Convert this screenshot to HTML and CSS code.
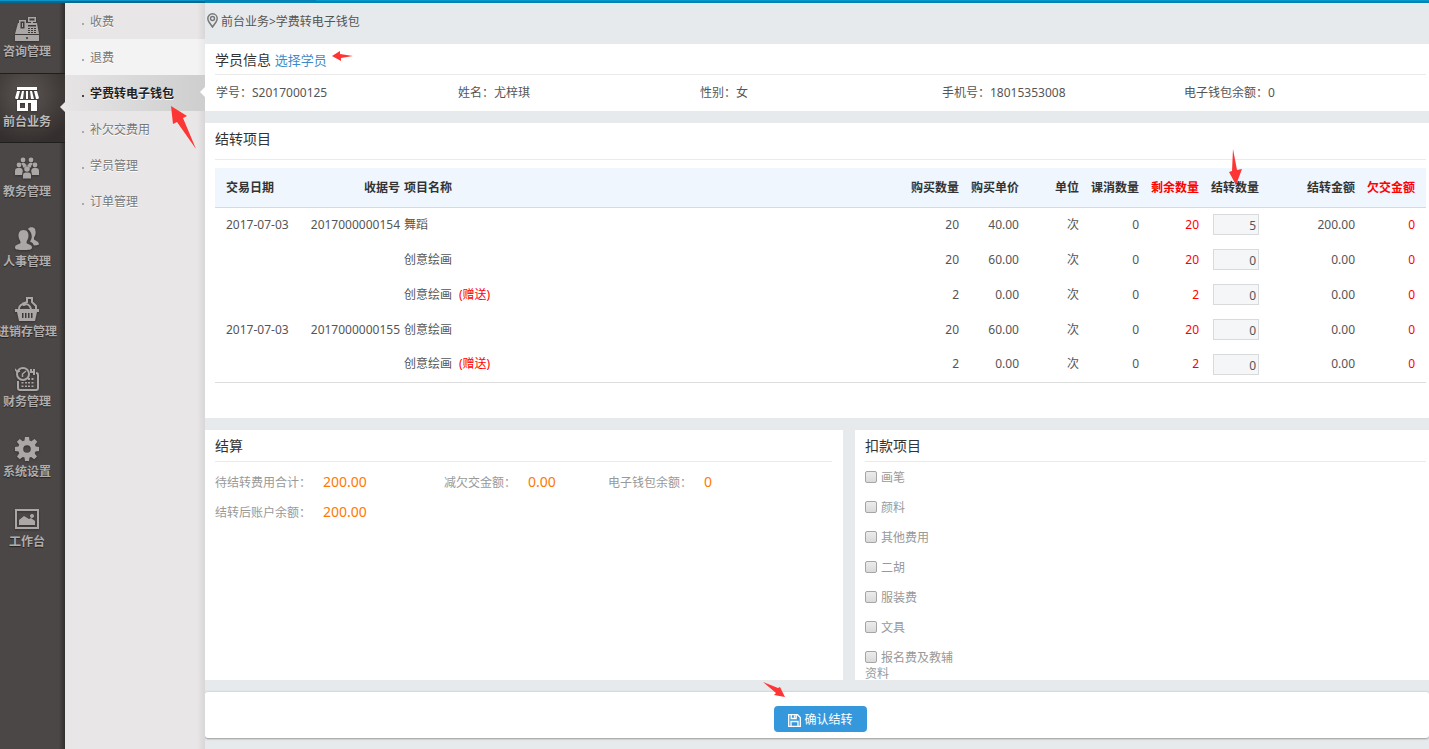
FILE: index.html
```html
<!DOCTYPE html>
<html lang="zh-CN">
<head>
<meta charset="utf-8">
<title>学费转电子钱包</title>
<link rel="stylesheet" href="styles.css">
</head>
<body>
<div class="topbar"></div>
<div class="app">
  <nav class="nav">
    <a class="nav-item" href="#"><svg class="nav-icon" viewBox="0 0 24 24"><path fill-rule="evenodd" d="M13 0h8v5h-3v1h4l2 11H0L3 6h1V3h7v3h5V5h-3zM14.500 1.500v2h5v-2zM5.500 4.500v7h4v-7zM7 6h1v4H7zM13 8v1.500h8V8zM13 11v1h2v-1zM16 11v1h2v-1zM19 11v1h2v-1zM13 13v1h2v-1zM16 13v1h2v-1zM19 13v1h2v-1zM13 15v1h2v-1zM16 15v1h2v-1zM19 15v1h2v-1zM0 18h24v6H0zM12 20a1 1 0 1 0 .01 0z"/></svg><span>咨询管理</span></a>
    <a class="nav-item active" href="#"><svg class="nav-icon" viewBox="0 0 24 24"><path fill-rule="evenodd" d="M2 0h20v3H2zM2 4h3L3 12H1l-1-1zM7 4h2L8 12H5zM11 4h2v8h-2zM15 4h2l2 8h-3zM19 4h3l2 7-1 1h-2zM2 13h20v11h-6v-8h-3v8H2zM5 16v5h5v-5z"/></svg><span>前台业务</span></a>
    <a class="nav-item" href="#"><svg class="nav-icon" viewBox="0 0 24 24"><circle cx="8" cy="3" r="2.400"/><circle cx="16" cy="3" r="2.400"/><circle cx="4" cy="8" r="2.400"/><circle cx="20" cy="8" r="2.400"/><circle cx="12" cy="12" r="2.800"/><path d="M6.500 6h3l2 2v1l-2 1.500H8Q8 8 6.500 7zM17.500 6h-3l-2 2v1l2 1.500H16Q16 8 17.500 7zM0 18v-4q0-3 3-3h2q2.500 0 2.800 3L7 18zM24 18v-4q0-3-3-3h-2q-2.500 0-2.800 3l.8 4zM8 21.500V18q0-2.500 3-2.500h2q3 0 3 2.500v3.500z"/></svg><span>教务管理</span></a>
    <a class="nav-item" href="#"><svg class="nav-icon" viewBox="0 0 24 24"><path d="M13 2c1-2.500 6-2.500 7 0s1 6-1 8.500v2c2 1.500 5 2 5 5q-2 1-5 1-1-3-4-4c3-4 2-9-2-12.500zM8.500 3c4 0 5 3 5 6s-2 4.500-2 6.500c0 2 5.500 1.500 5.500 5 0 2.500-4 2.500-8.500 2.500S0 23 0 20.500c0-3.500 5.500-3 5.500-5S3.500 12 3.500 9s1-6 5-6z"/></svg><span>人事管理</span></a>
    <a class="nav-item" href="#"><svg class="nav-icon" viewBox="0 0 24 24"><path fill-rule="evenodd" d="M0 12h24v3h-2l-2 9H4L2 15H0zM7 16v5h1.500v-5zM10 16v5h1.500v-5zM13 16v5h1.500v-5zM16 16v5h1.500v-5z"/><path class="line" d="M4 12c0-4 3-5 5-4 3-2 6 0 7 4M7 7l5-2V1h5v4l4 4v3"/></svg><span>进销存管理</span></a>
    <a class="nav-item" href="#"><svg class="nav-icon" viewBox="0 0 24 24"><path class="line" d="M3 14v7q0 2 2 2h16q2 0 2-2V8q0-2-2-2M15 5h4M16 2v3M19 2v6"/><circle class="line" cx="8" cy="7" r="6"/><path class="line thin" d="M11 4L7.500 7v3M0 2l2 3 3-1"/><path d="M13 11h2v2h-2zM16.500 11h2v2h-2zM6.500 15h2v1.500h-2zM10 15h2v1.500h-2zM13 15h2v1.500h-2zM16.500 15h2v1.500h-2zM6.500 18.500h2V20h-2zM10 18.500h2V20h-2zM13 18.500h2V20h-2zM16.500 18.500h2V20h-2z"/></svg><span>财务管理</span></a>
    <a class="nav-item" href="#"><svg class="nav-icon" viewBox="0 0 24 24"><path fill-rule="evenodd" d="M10 0h4l.5 3.500 2 .8L19.500 2l2.800 2.800-2.300 3 .7 1.800L24 10v4l-3.500.5-.8 2 2.300 3-2.800 2.800-3-2.300-1.700.6L14 24h-4l-.5-3.400-1.800-.7-3 2.400L2 19.500l2.200-3-.7-2L0 14v-4l3.400-.5.8-1.800-2.300-3L4.700 2l3 2.300 1.800-.8zM12 8.200a3.800 3.800 0 1 0 0 7.600 3.800 3.800 0 1 0 0-7.600z"/></svg><span>系统设置</span></a>
    <a class="nav-item" href="#"><svg class="nav-icon" viewBox="0 0 24 24"><path fill-rule="evenodd" d="M0 2h24v20H0zM2 4v16h20V4zM4 17v-4l5-4 5 3 2-1 4 3v4H4zM17 7a2 2 0 1 0 .01 0z"/></svg><span>工作台</span></a>
  </nav>
  <nav class="subnav">
    <a class="sub-item" href="#">收费</a>
    <a class="sub-item hover" href="#">退费</a>
    <a class="sub-item active" href="#">学费转电子钱包<svg class="arrow arrow-menu" viewBox="0 0 26 44"><path d="M0 0l16 10-4 2 13 31L6 16l-4 2z"/></svg></a>
    <a class="sub-item" href="#">补欠交费用</a>
    <a class="sub-item" href="#">学员管理</a>
    <a class="sub-item" href="#">订单管理</a>
  </nav>
  <main class="main">
    <div class="crumbs"><svg class="pin" viewBox="0 0 11 15"><path d="M5.500 14L2 9Q.8 7 .8 5.500a4.700 4.700 0 0 1 9.400 0Q10.200 7 9 9z"/><circle cx="5.500" cy="5.500" r="2"/></svg><span>前台业务&gt;学费转电子钱包</span></div>

    <section class="panel">
      <h2 class="title compact">学员信息 <a class="pick" href="#">选择学员<svg class="arrow arrow-pick" viewBox="0 0 21 10"><path d="M0 5l8-5v3l13 2-12 2v3z"/></svg></a></h2>
      <div class="student">
        <span>学号：S2017000125</span><span>姓名：尤梓琪</span><span>性别：女</span><span>手机号：18015353008</span><span>电子钱包余额：0</span>
      </div>
    </section>

    <section class="panel items">
      <h2 class="title">结转项目</h2>
      <table class="grid">
        <colgroup><col class="c-date"><col class="c-receipt"><col><col class="c-num"><col class="c-num"><col class="c-num"><col class="c-num"><col class="c-num"><col class="c-num"><col class="c-sum"><col class="c-last"></colgroup>
        <thead>
          <tr><th class="left">交易日期</th><th>收据号</th><th class="left">项目名称</th><th>购买数量</th><th>购买单价</th><th>单位</th><th>课消数量</th><th class="red">剩余数量</th><th><span class="mark">结转数量<svg class="arrow arrow-qty" viewBox="0 0 14 36"><path d="M4 0l4 21 5-1-6 16L0 23l3-1z"/></svg></span></th><th>结转金额</th><th class="red">欠交金额</th></tr>
        </thead>
        <tbody>
          <tr><td class="left">2017-07-03</td><td>2017000000154</td><td class="left">舞蹈</td><td>20</td><td>40.00</td><td>次</td><td>0</td><td class="red">20</td><td><input class="qty" type="text" aria-label="结转数量" value="5"></td><td>200.00</td><td class="red">0</td></tr>
          <tr><td></td><td></td><td class="left">创意绘画</td><td>20</td><td>60.00</td><td>次</td><td>0</td><td class="red">20</td><td><input class="qty" type="text" aria-label="结转数量" value="0"></td><td>0.00</td><td class="red">0</td></tr>
          <tr><td></td><td></td><td class="left">创意绘画<span class="gift">(赠送)</span></td><td>2</td><td>0.00</td><td>次</td><td>0</td><td class="red">2</td><td><input class="qty" type="text" aria-label="结转数量" value="0"></td><td>0.00</td><td class="red">0</td></tr>
          <tr><td class="left">2017-07-03</td><td>2017000000155</td><td class="left">创意绘画</td><td>20</td><td>60.00</td><td>次</td><td>0</td><td class="red">20</td><td><input class="qty" type="text" aria-label="结转数量" value="0"></td><td>0.00</td><td class="red">0</td></tr>
          <tr><td></td><td></td><td class="left">创意绘画<span class="gift">(赠送)</span></td><td>2</td><td>0.00</td><td>次</td><td>0</td><td class="red">2</td><td><input class="qty" type="text" aria-label="结转数量" value="0"></td><td>0.00</td><td class="red">0</td></tr>
        </tbody>
      </table>
    </section>

    <div class="bottom">
      <section class="panel settle">
        <h2 class="title compact">结算</h2>
        <div class="totals">
          <div class="total"><span>待结转费用合计：</span><b>200.00</b></div>
          <div class="total"><span>减欠交金额：</span><b>0.00</b></div>
          <div class="total"><span>电子钱包余额：</span><b>0</b></div>
          <div class="total"><span>结转后账户余额：</span><b>200.00</b></div>
        </div>
      </section>
      <section class="panel deduct">
        <h2 class="title compact">扣款项目</h2>
        <div class="checks">
          <label class="check"><input type="checkbox">画笔</label>
          <label class="check"><input type="checkbox">颜料</label>
          <label class="check"><input type="checkbox">其他费用</label>
          <label class="check"><input type="checkbox">二胡</label>
          <label class="check"><input type="checkbox">服装费</label>
          <label class="check"><input type="checkbox">文具</label>
          <label class="check"><input type="checkbox">报名费及教辅资料</label>
        </div>
      </section>
    </div>

    <footer class="actions">
      <button class="confirm" type="button"><svg class="save" viewBox="0 0 13 13"><path d="M.7.700h8.800l2.800 2.800v8.800H.7zM3 12V7.500h7V12M3.200 1v3.500h5V1M6.500 1.500v2"/></svg>确认结转<svg class="arrow arrow-confirm" viewBox="0 0 23 15"><path d="M0 0l15 6 2-1 5 10-11-2 2-2z"/></svg></button>
    </footer>
  </main>
</div>
</body>
</html>
```
FILE: styles.css
```css
* { box-sizing: border-box; }

body {
  margin: 0;
  height: 100vh;
  display: flex;
  flex-direction: column;
  overflow: hidden;
  font: 12px/16px "Noto Sans", "Noto Sans CJK SC", sans-serif;
  color: #555;
  background: #e6eaed;
}

a { text-decoration: none; color: inherit; }

.topbar {
  flex: none;
  height: 3px;
  background:
    linear-gradient(#0a94c8 1px, #006a90 1px) 0 0 / 205px 3px no-repeat,
    linear-gradient(#0583b4, #0583b4) 0 0 / 316px 3px no-repeat,
    linear-gradient(#0a99cd 1px, #0583b4 1px);
}

.app { flex: 1; min-height: 0; display: flex; }

/* primary navigation */
.nav {
  flex: none;
  width: 65px;
  background: linear-gradient(90deg, #4b4747 59px, #312e2e 65px);
}
.nav-item {
  position: relative;
  display: flex;
  flex-direction: column;
  align-items: center;
  height: 70px;
  padding: 14px 11px 0 0;
  font-weight: bold;
  color: #b0adac;
  white-space: nowrap;
  text-shadow: 0 1px 1px #222;
}
.nav-item span { margin-top: 3px; }
.nav-icon { width: 24px; height: 24px; fill: #aaa7a6; filter: drop-shadow(0 1px 1px #353131); }
.nav-icon .line { fill: none; stroke: #aaa7a6; stroke-width: 2; }
.nav-icon .thin { stroke-width: 1.5; }
.nav-item.active {
  color: #bcb9b8;
  background: radial-gradient(circle at 27px 20px, #5c5553, #342f2e 50px);
  border: solid #211e1e;
  border-width: 1px 0;
  padding-top: 13px;
}
.nav-item.active .nav-icon { fill: #fff; }
.nav-item.active::after,
.sub-item.active::after {
  content: "";
  position: absolute;
  right: 0;
  top: 50%;
  margin-top: -6px;
  border: solid transparent;
  border-width: 5px 5px 5px 0;
  border-right-color: #e8e6e7;
}

/* secondary navigation */
.subnav {
  position: relative;
  flex: none;
  width: 140px;
  background: linear-gradient(90deg, #e8e6e7 132px, #d8d7d7 140px);
}
.sub-item {
  position: relative;
  display: block;
  height: 36px;
  padding: 1px 0 0 25px;
  line-height: 36px;
  color: #777;
  text-shadow: 0 1px 0 #fff;
}
.sub-item::before {
  content: "";
  position: absolute;
  left: 17px;
  top: 20px;
  width: 2px;
  height: 2px;
  background: #aaa;
}
.sub-item.hover { background: linear-gradient(90deg, #f3f3f3 132px, #e9e9e9); }
.sub-item.active {
  font-weight: bold;
  color: #222;
  background: linear-gradient(90deg, #e6e4e5, #cecece);
}
.sub-item.active::before { background: #444; }
.sub-item.active::after { border-right-color: #fff; }

/* content */
.main {
  flex: 1;
  min-width: 0;
  display: flex;
  flex-direction: column;
  padding-bottom: 11px;
}
.crumbs { flex: none; display: flex; height: 41px; padding: 10px 0 0 2px; gap: 3px; }
.crumbs span { padding-top: 1px; }
.pin { width: 11px; height: 15px; fill: none; stroke: #777; stroke-width: 1.5; }

.panel { background: #fff; padding: 0 3px 0 10px; }
.title {
  margin: 0;
  height: 37px;
  line-height: 32px;
  font-size: 14px;
  font-weight: normal;
  color: #333;
  border-bottom: 1px solid #eaeaea;
}
.title.compact { height: 31px; }
.settle .title, .deduct .title { height: 32px; }
.pick { position: relative; font-size: 13px; color: #428bca; }

.student { display: grid; grid-template-columns: repeat(5, 1fr); padding: 10px 0 10px 1px; }

.items { margin: 12px 0; padding-bottom: 35px; }
.grid {
  width: 100%;
  margin-top: 8px;
  table-layout: fixed;
  border-collapse: collapse;
  border-bottom: 1px solid #ddd;
}
.c-date { width: 82px; }
.c-receipt { width: 105px; }
.c-num { width: 60px; }
.c-sum { width: 96px; }
.c-last { width: 69px; }
.grid th, .grid td { height: 35px; padding: 0 2px; text-align: right; white-space: nowrap; }
.grid th { height: 39px; padding-top: 2px; color: #333; background: #eff6fe; border-bottom: 1px solid #c9dfe8; }
.grid .left { text-align: left; }
.grid th:first-child, .grid td:first-child { padding-left: 11px; }
.grid th:last-child, .grid td:last-child { padding-right: 11px; }
.grid .red, .gift { color: #f00; }
.gift { margin-left: 7px; }
.mark { position: relative; }
.qty {
  display: block;
  width: 46px;
  height: 21px;
  margin-left: auto;
  padding: 2px 2px 0;
  border: 1px solid #d9dadc;
  background: #f5f6f8;
  font: inherit;
  color: #555;
  text-align: right;
}

.bottom {
  flex: 1;
  min-height: 0;
  display: grid;
  grid-template-columns: 10fr 9fr;
  grid-template-rows: 100%;
  gap: 12px;
}
.bottom .panel { overflow: hidden; }
.settle { padding-right: 11px; }
.totals { display: grid; grid-template-columns: 229px 164px 1fr; padding-top: 5px; line-height: 30px; color: #999; }
.total { display: flex; gap: 12px; height: 30px; }
.total span { padding-top: 1px; }
.total b { font-size: 14px; font-weight: normal; color: #ff7800; }

.checks { width: 96px; padding-top: 8px; }
.check { display: block; min-height: 30px; color: #999; }
.check input {
  appearance: none;
  width: 12px;
  height: 12px;
  margin: 0 4px 0 0;
  vertical-align: -1px;
  border: 1px solid #a5a5a5;
  border-radius: 2px;
  background: linear-gradient(#ececec, #dadada);
}

.actions {
  flex: none;
  display: flex;
  justify-content: center;
  margin-top: 11px;
  padding: 14px 0 6px 7px;
  background: #fff;
  border-top: 1px solid #d6dadd;
  border-radius: 3px;
  box-shadow: 0 1px 2px #999;
}
.confirm {
  position: relative;
  display: flex;
  align-items: center;
  gap: 3px;
  height: 26px;
  padding: 2px 14px 0;
  border: 0;
  border-radius: 4px;
  background: #3598dc;
  color: #fff;
  font: inherit;
}
.save { width: 13px; height: 13px; fill: none; stroke: #fff; stroke-width: 1.3; }

/* callout arrows */
.arrow { position: absolute; z-index: 2; fill: #fd3535; }
.arrow-menu { width: 26px; height: 44px; left: 106px; top: 31px; }
.arrow-pick { width: 21px; height: 10px; left: 57px; top: 0; }
.arrow-qty { width: 14px; height: 36px; right: 16px; top: -30px; }
.arrow-confirm { width: 23px; height: 15px; left: -11px; top: -24px; }
```
